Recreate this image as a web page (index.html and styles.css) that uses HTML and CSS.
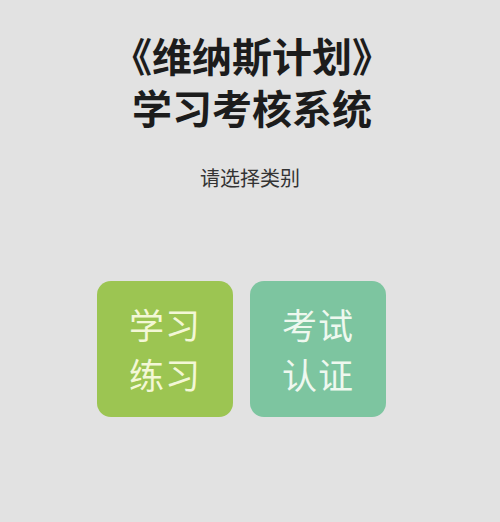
FILE: index.html
```html
<!DOCTYPE html>
<html lang="zh">
<head>
    <meta charset="UTF-8">
    <meta name="viewport" content="width=device-width, initial-scale=1.0">
    <title>学习考核系统</title>
    <link rel="stylesheet" href="styles.css">
</head>
<body>

    <!-- 标题 -->
    <div class="page">
        <h1 class="title">
            <span class="title-line">《维纳斯计划》</span>
            <span class="title-line">学习考核系统</span>
        </h1>
        <p class="subtitle">请选择类别</p>

        <!-- 类别按钮 -->
        <div class="choices">
            <a href="javascript:void(0)" class="choice choice-study">学习<br>练习</a>
            <a href="javascript:void(0)" class="choice choice-exam">考试<br>认证</a>
        </div>
    </div>

</body>
</html>
```

FILE: styles.css
```css
/* 基本样式 */
body {
    margin: 0;
    padding: 0;
    background-color: #e2e2e2;
    font-family: "Noto Sans CJK SC", "Noto Sans", sans-serif;
}

.page {
    display: flex;
    flex-direction: column;
    align-items: center;
    padding-top: 29px;
}

.title {
    margin: 0;
    font-size: 40px;
    font-weight: bold;
    color: #1c1c1c;
    text-align: center;
    padding-left: 4px;
}

.title-line {
    display: block;
    line-height: 52px;
}

.subtitle {
    margin: 31px 0 0;
    font-size: 20px;
    line-height: 28px;
    color: #333;
}

/* 按钮 */
.choices {
    display: flex;
    gap: 17px;
    margin-top: 89px;
    padding-right: 17px;
}

.choice {
    width: 136px;
    height: 136px;
    border-radius: 14px;
    display: flex;
    align-items: center;
    justify-content: center;
    text-align: center;
    font-size: 35px;
    line-height: 50px;
    text-decoration: none;
    letter-spacing: 1px;
}

.choice-study {
    background-color: #9cc552;
    color: #f3f7d6;
}

.choice-exam {
    background-color: #7dc5a0;
    color: #eef8ef;
}
```
